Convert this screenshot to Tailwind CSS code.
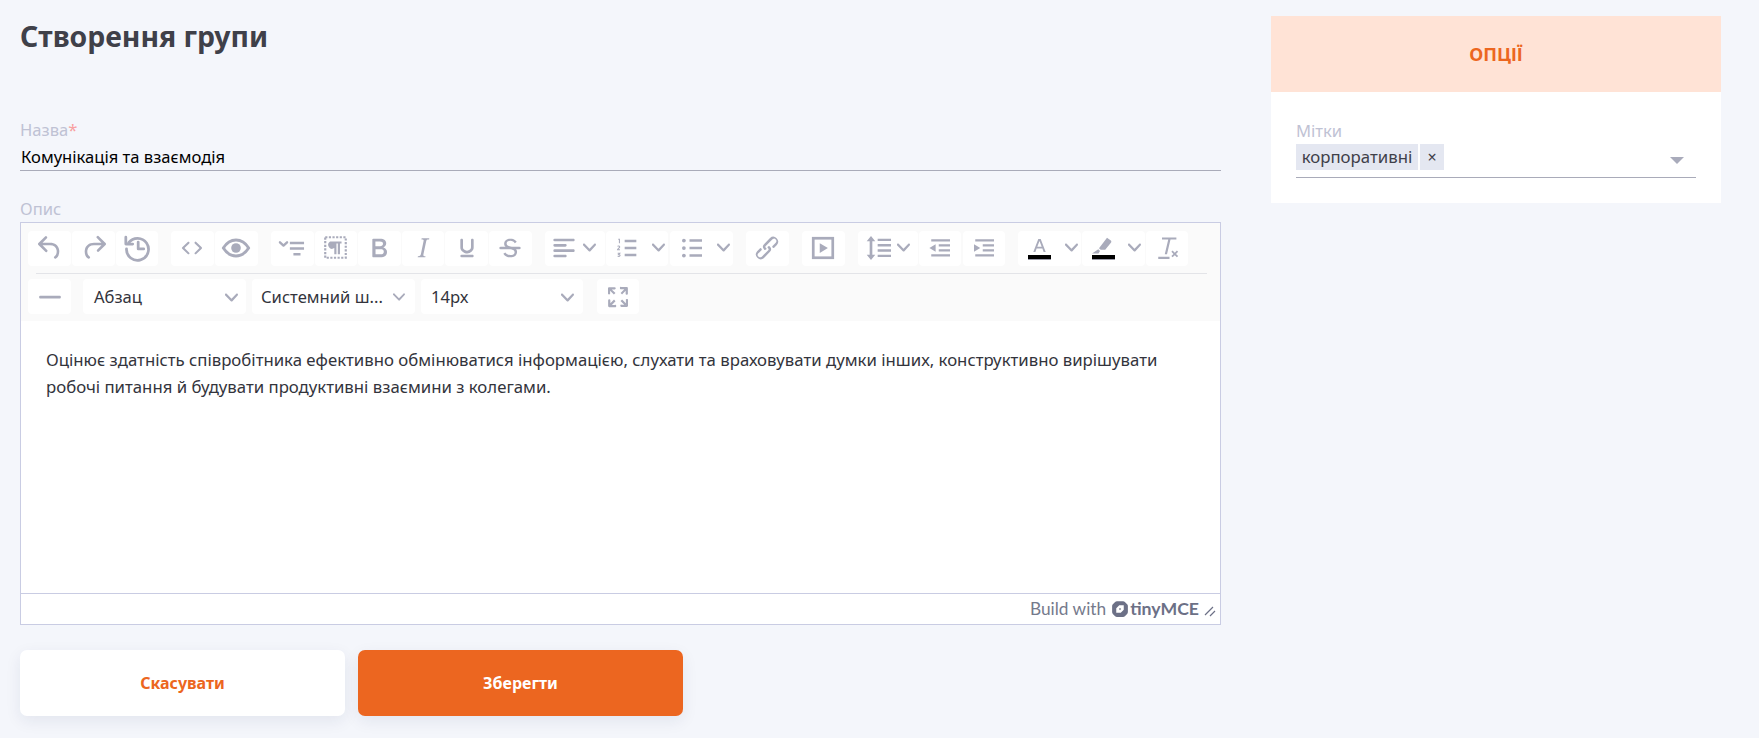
<!DOCTYPE html>
<html lang="uk">
  <head>
    <meta charset="UTF-8" />
    <title>Створення групи</title>
    <script src="https://cdn.jsdelivr.net/npm/@tailwindcss/browser@4"></script>
  </head>
  <body class="bg-[#f4f6fb] font-['Noto_Sans',sans-serif] overflow-hidden">
    <div class="h-[738px] flex items-start pl-[20px] pr-[38px]">
      <!-- Main form -->
      <div class="w-[1201px] mr-[50px] shrink-0">
        <h1 class="h-[72px] pt-[15px] text-[28.4px] leading-[42px] font-bold text-[#3f4049]">Створення групи</h1>
        <div class="mt-[46px] h-[26px] text-[16.6px] leading-[24px] text-[#bfc2d4]">Назва<span class="text-[#f8a0a0]">*</span></div>
        <div class="h-[27px] pl-[1px] border-b border-[#a9abb9] text-[16.6px] leading-[26px] text-black">Комунікація та взаємодія</div>
        <div class="mt-[26px] h-[25px] text-[16.6px] leading-[24px] text-[#bfc2d4]">Опис</div>

        <!-- Editor -->
        <div class="h-[403px] border border-[#c9cce3] flex flex-col bg-white">
          <div class="h-[98px] bg-[#fafafa] pt-[8px] pl-[7px] text-[#a9abbb]">
            <!-- Row 1 -->
            <div class="flex h-[35px] [&_svg]:-translate-y-px">
              <div class="flex gap-[1px]">
                <button class="w-[43px] h-[35px] bg-white rounded-[4px] flex items-center justify-center">
                  <svg class="w-[32px] h-[32px] shrink-0 fill-current" viewBox="0 0 24 24"><path d="M6.4 8H12c3.7 0 6.2 2 6.8 5.1.6 2.7-.4 5.6-2.3 6.8a1 1 0 0 1-1-1.8c1.1-.6 1.8-2.7 1.4-4.6-.5-2.1-2.1-3.5-4.9-3.5H6.4l3.3 3.3a1 1 0 1 1-1.4 1.4l-5-5a1 1 0 0 1 0-1.4l5-5a1 1 0 0 1 1.4 1.4L6.4 8Z"/></svg>
                </button>
                <button class="w-[43px] h-[35px] bg-white rounded-[4px] flex items-center justify-center">
                  <svg class="w-[32px] h-[32px] shrink-0 fill-current" viewBox="0 0 24 24"><path d="M17.6 10H12c-2.8 0-4.4 1.4-4.9 3.5-.4 2 .3 4 1.4 4.6a1 1 0 1 1-1 1.8c-2-1.2-2.9-4.1-2.3-6.8.6-3 3-5.1 6.8-5.1h5.6l-3.3-3.3a1 1 0 1 1 1.4-1.4l5 5a1 1 0 0 1 0 1.4l-5 5a1 1 0 0 1-1.4-1.4l3.3-3.3Z"/></svg>
                </button>
                <button class="w-[42px] h-[35px] bg-white rounded-[4px] flex items-center justify-center">
                  <svg class="w-[33px] h-[33px] shrink-0 fill-none stroke-current stroke-2" viewBox="0 0 24 24"><path d="M5.6 8.500A8 8 0 1 1 4 13" stroke-linecap="round"/><path d="M3.500 4.500v5h5" stroke-linecap="round" stroke-linejoin="round"/><path d="M12.500 8v5h4" stroke-linecap="round" stroke-linejoin="round"/></svg>
                </button>
              </div>
              <div class="flex gap-[1px] ml-[13px]">
                <button class="w-[43px] h-[35px] bg-white rounded-[4px] flex items-center justify-center pr-[2px]">
                  <svg class="w-[30px] h-[30px] shrink-0 fill-current" viewBox="0 0 24 24"><path d="M9.800 15.700c.3.300.3.800 0 1-.3.400-.9.400-1.200 0l-4.400-4.100a.8.800 0 0 1 0-1.200l4.400-4.200c.3-.3.900-.3 1.200 0 .3.300.3.800 0 1.100L6 12l3.800 3.700ZM14.200 15.700c-.3.300-.3.800 0 1 .4.400.9.400 1.200 0l4.400-4.100c.3-.3.300-.9 0-1.200l-4.400-4.200a.8.800 0 0 0-1.200 0c-.3.300-.3.800 0 1.100L18 12l-3.800 3.700Z"/></svg>
                </button>
                <button class="w-[43px] h-[35px] bg-white rounded-[4px] flex items-center justify-center pr-[2px]">
                  <svg class="w-[32px] h-[32px] shrink-0" viewBox="0 0 24 24"><path class="fill-none stroke-current" stroke-width="2.200" d="M2.500 12C5 8 8.200 6 12 6s7 2 9.500 6c-2.500 4-5.700 6-9.500 6s-7-2-9.500-6Z" stroke-linejoin="round"/><circle class="fill-current" cx="12" cy="12" r="3.600"/></svg>
                </button>
              </div>
              <div class="flex gap-[1px] ml-[13px]">
                <button class="w-[42.6px] h-[35px] bg-white rounded-[4px] flex items-center justify-center">
                  <svg class="w-[34px] h-[34px] shrink-0" viewBox="0 0 24 24"><path class="fill-none stroke-current" stroke-width="1.700" d="M3.500 8 6 10.300 8.500 8" stroke-linecap="round" stroke-linejoin="round"/><path class="fill-current" d="M10.500 7.500h10v1.800h-10zM10.500 11.500h10v1.800h-10zM13 15.500h5v1.800h-5z"/></svg>
                </button>
                <button class="w-[42.6px] h-[35px] bg-white rounded-[4px] flex items-center justify-center">
                  <svg class="w-[29px] h-[29px] shrink-0" viewBox="0 0 24 24"><rect class="fill-none stroke-current" stroke-width="1.800" stroke-dasharray="1.800 1.200" x="3.500" y="3.500" width="17" height="17"/><path class="fill-current" d="M7.500 7h9.500v1.700h-1.300V17.500h-1.800V8.700h-1.100V17.500h-1.800v-5A3 3 0 0 1 7.500 7Z"/></svg>
                </button>
                <button class="w-[42.6px] h-[35px] bg-white rounded-[4px] flex items-center justify-center">
                  <svg class="w-[32px] h-[32px] shrink-0 fill-current" viewBox="0 0 24 24"><path d="M7.800 19c-.3 0-.5 0-.6-.2l-.2-.5V5.700c0-.2 0-.4.2-.5l.6-.2h5c1.500 0 2.700.3 3.500 1 .7.600 1.100 1.400 1.100 2.500a3 3 0 0 1-.6 1.900c-.4.600-1 1-1.600 1.200.4.100.9.300 1.300.6s.8.700 1 1.200c.4.400.5 1 .5 1.600 0 1.300-.4 2.300-1.300 3-.8.700-2.100 1-3.800 1H7.800Zm5-8.300c.6 0 1.200-.1 1.600-.5.400-.3.600-.7.600-1.300 0-1.100-.8-1.700-2.300-1.700H9.300v3.500h3.500Zm.5 6c.7 0 1.300-.1 1.700-.4.400-.4.600-.9.600-1.500s-.2-1-.7-1.400c-.4-.3-1-.4-2-.4H9.400v3.700h3.900Z"/></svg>
                </button>
                <button class="w-[42.6px] h-[35px] bg-white rounded-[4px] flex items-center justify-center">
                  <svg class="w-[32px] h-[32px] shrink-0 fill-current" viewBox="0 0 24 24"><path d="m16.700 4.700-.1.900h-.3c-.6 0-1 0-1.400.3-.3.3-.4.600-.5 1.100l-2.100 9.800v.6c0 .5.400.8 1.400.8h.2l-.2.800H8l.2-.8h.2c1.100 0 1.800-.5 2-1.500l2-9.800.1-.5c0-.6-.4-.8-1.400-.8h-.3l.2-.9h5.800Z"/></svg>
                </button>
                <button class="w-[42.6px] h-[35px] bg-white rounded-[4px] flex items-center justify-center">
                  <svg class="w-[32px] h-[32px] shrink-0 fill-current" viewBox="0 0 24 24"><path d="M16 5c.6 0 1 .4 1 1v5.500a4 4 0 0 1-.4 1.800l-1 1.400a5.300 5.300 0 0 1-5.500 1 5 5 0 0 1-1.600-1c-.5-.4-.8-.9-1.100-1.400a4 4 0 0 1-.4-1.800V6c0-.6.400-1 1-1s1 .4 1 1v5.500c0 .3 0 .6.200 1l.6.700a3.300 3.300 0 0 0 2.200.8 3.400 3.400 0 0 0 2.200-.8c.3-.2.400-.5.600-.8l.2-.9V6c0-.6.400-1 1-1ZM8 17h8c.6 0 1 .4 1 1s-.4 1-1 1H8a1 1 0 0 1 0-2Z"/></svg>
                </button>
                <button class="w-[42.6px] h-[35px] bg-white rounded-[4px] flex items-center justify-center">
                  <svg class="w-[32px] h-[32px] shrink-0 fill-current" viewBox="0 0 24 24"><path d="M15.600 8.500c-.5-.7-1-1.100-1.300-1.300-.6-.4-1.300-.6-2-.6-2.700 0-2.800 1.700-2.800 2.100 0 1.600 1.800 2 3.200 2.300 4.400.9 4.600 2.800 4.600 3.900 0 1.400-.7 4.100-5 4.100A6.200 6.200 0 0 1 7 16.400l1.500-1.100c.4.600 1.600 2 3.700 2 1.600 0 2.500-.4 3-1.200.4-.8.3-2-.8-2.600-.7-.4-1.600-.7-2.900-1-1-.2-3.900-.8-3.900-3.600C7.600 6 10.300 5 12.400 5c2.900 0 4.200 1.600 4.700 2.400l-1.500 1.100Z"/><path d="M5 11h14a1 1 0 0 1 0 2H5a1 1 0 0 1 0-2Z"/></svg>
                </button>
              </div>
              <div class="flex gap-[1.500px] ml-[13px]">
                <button class="w-[60px] h-[35px] bg-white rounded-[4px] flex items-center pl-[3px] gap-[3px]">
                  <svg class="w-[32px] h-[32px] shrink-0 fill-current" viewBox="0 0 24 24"><path d="M5 5h14c.6 0 1 .4 1 1s-.4 1-1 1H5a1 1 0 1 1 0-2Zm0 4h8c.6 0 1 .4 1 1s-.4 1-1 1H5a1 1 0 1 1 0-2Zm0 8h8c.6 0 1 .4 1 1s-.4 1-1 1H5a1 1 0 0 1 0-2Zm0-4h14c.6 0 1 .4 1 1s-.4 1-1 1H5a1 1 0 0 1 0-2Z"/></svg>
                  <svg class="w-[13px] h-[13px] shrink-0 fill-current" viewBox="0 0 10 10"><path d="M8.700 2.200c.3-.3.800-.3 1 0 .4.400.4.900 0 1.200L5.700 7.800c-.3.300-.9.300-1.200 0L.2 3.400a.8.800 0 0 1 0-1.200c.3-.3.800-.3 1.100 0L5 6l3.700-3.800Z"/></svg>
                </button>
                <button class="w-[62px] h-[35px] bg-white rounded-[4px] flex items-center pl-[7px] gap-[11px]">
                  <svg class="w-[28px] h-[28px] shrink-0" viewBox="0 0 24 24"><path class="fill-current" d="M10 5h10v2H10zM10 11h10v2H10zM10 17h10v2H10z"/><path class="fill-none stroke-current" stroke-width=".900" d="M4.500 4.500h1v3.500M3.900 10.600c.5-.6 2-.4 1.800.6-.1.700-1.500 1.200-1.800 2.300h2.100M4 16.500h1.800l-1 1.100c1 0 1.400.4 1.200 1-.2.700-1.400.7-2 .3"/></svg>
                  <svg class="w-[13px] h-[13px] shrink-0 fill-current" viewBox="0 0 10 10"><path d="M8.700 2.200c.3-.3.800-.3 1 0 .4.400.4.900 0 1.200L5.700 7.800c-.3.300-.9.300-1.200 0L.2 3.400a.8.800 0 0 1 0-1.200c.3-.3.800-.3 1.100 0L5 6l3.700-3.800Z"/></svg>
                </button>
                <button class="w-[63px] h-[35px] bg-white rounded-[4px] flex items-center pl-[7px] gap-[10px]">
                  <svg class="w-[30px] h-[30px] shrink-0 fill-current" viewBox="0 0 24 24"><circle cx="5.500" cy="6" r="1.500"/><circle cx="5.500" cy="12" r="1.500"/><circle cx="5.500" cy="18" r="1.500"/><path d="M10 5h10v2H10zM10 11h10v2H10zM10 17h10v2H10z"/></svg>
                  <svg class="w-[13px] h-[13px] shrink-0 fill-current" viewBox="0 0 10 10"><path d="M8.700 2.200c.3-.3.800-.3 1 0 .4.400.4.900 0 1.200L5.700 7.800c-.3.300-.9.300-1.200 0L.2 3.400a.8.800 0 0 1 0-1.200c.3-.3.800-.3 1.100 0L5 6l3.700-3.800Z"/></svg>
                </button>
              </div>
              <button class="ml-[13px] w-[43px] h-[35px] bg-white rounded-[4px] flex items-center justify-center">
                <svg class="w-[30px] h-[30px] shrink-0 fill-current" viewBox="0 0 24 24"><path d="M6.200 12.300a1 1 0 0 1 1.400 1.400l-2 2a2 2 0 1 0 2.600 2.800l4.800-4.800a1 1 0 0 0 0-1.400 1 1 0 1 1 1.400-1.300 2.900 2.900 0 0 1 0 4L9.600 20a3.900 3.900 0 0 1-5.500-5.500l2-2Zm11.600-.6a1 1 0 0 1-1.400-1.400l2-2a2 2 0 1 0-2.600-2.800L11 10.300a1 1 0 0 0 0 1.400A1 1 0 1 1 9.600 13a2.900 2.900 0 0 1 0-4L14.400 4a3.900 3.900 0 0 1 5.500 5.500l-2 2Z"/></svg>
              </button>
              <button class="ml-[13px] w-[43px] h-[35px] bg-white rounded-[4px] flex items-center justify-center">
                <svg class="w-[26px] h-[26px] shrink-0" viewBox="0 0 24 24"><rect class="fill-none stroke-current" stroke-width="2.500" x="3" y="3" width="18" height="18"/><path class="fill-current" d="M9 7.500v9l7.500-4.500Z"/></svg>
              </button>
              <div class="flex gap-[1.500px] ml-[13px]">
                <button class="w-[60px] h-[35px] bg-white rounded-[4px] flex items-center pl-[5px] gap-[2px]">
                  <svg class="w-[32px] h-[32px] shrink-0 fill-current" viewBox="0 0 24 24"><path d="M11 5h10v1.800H11zM11 9h10v1.800H11zM11 13h10v1.800H11zM11 17h10v1.800H11z"/><path d="M6 3 2.800 7h2.200v10H2.800L6 21l3.200-4H7V7h2.200Z"/></svg>
                  <svg class="w-[13px] h-[13px] shrink-0 fill-current" viewBox="0 0 10 10"><path d="M8.700 2.200c.3-.3.800-.3 1 0 .4.400.4.900 0 1.200L5.700 7.800c-.3.300-.9.300-1.200 0L.2 3.400a.8.800 0 0 1 0-1.200c.3-.3.800-.3 1.100 0L5 6l3.700-3.800Z"/></svg>
                </button>
                <button class="w-[42px] h-[35px] bg-white rounded-[4px] flex items-center justify-center">
                  <svg class="w-[30px] h-[30px] shrink-0 fill-current" viewBox="0 0 24 24"><path d="M5 5h15v1.800H5zM11 9h9v1.800h-9zM11 13h9v1.800h-9zM5 17h15v1.800H5z"/><path d="M8.500 9v6L3.500 12Z"/></svg>
                </button>
                <button class="w-[42.500px] h-[35px] bg-white rounded-[4px] flex items-center justify-center">
                  <svg class="w-[30px] h-[30px] shrink-0 fill-current" viewBox="0 0 24 24"><path d="M5 5h15v1.800H5zM11 9h9v1.800h-9zM11 13h9v1.800h-9zM5 17h15v1.800H5z"/><path d="M4 9v6l5-3Z"/></svg>
                </button>
              </div>
              <div class="flex gap-[1px] ml-[13px]">
                <button class="w-[63px] h-[35px] bg-white rounded-[4px] flex items-center pl-[10px] gap-[14px]">
                  <span class="w-[23px] h-[22px] flex flex-col items-center justify-end">
                    <svg class="w-[23px] h-[15px] shrink-0 fill-current" viewBox="0 0 23 15"><path d="M10.300 1h2.400l5 13h-2.100l-1.200-3.500H8.600L7.400 14H5.300L10.300 1Zm3.400 7.800-2.200-5.900-2.200 5.900h4.400Z"/></svg>
                    <span class="block w-[23px] h-[5px] mt-[1px] bg-black border-b border-[#9a9aa8]"></span>
                  </span>
                  <svg class="w-[13px] h-[13px] shrink-0 fill-current" viewBox="0 0 10 10"><path d="M8.700 2.200c.3-.3.800-.3 1 0 .4.400.4.900 0 1.200L5.700 7.800c-.3.300-.9.300-1.200 0L.2 3.400a.8.800 0 0 1 0-1.200c.3-.3.800-.3 1.100 0L5 6l3.700-3.800Z"/></svg>
                </button>
                <button class="w-[63px] h-[35px] bg-white rounded-[4px] flex items-center pl-[10px] gap-[13px]">
                  <span class="w-[23px] h-[22px] flex flex-col items-center justify-end">
                    <svg class="w-[23px] h-[17px] shrink-0 fill-current" viewBox="0 0 23 17"><path d="M15 .8 18.500 3.300c1 .8 1.100 1.700.4 2.500l-5.700 7h-4.500L7 11.300Z"/><path d="M6.300 12.300 8 14 6.500 16.500H0Z"/></svg>
                    <span class="block w-[23px] h-[5px] bg-black border-b border-[#9a9aa8]"></span>
                  </span>
                  <svg class="w-[13px] h-[13px] shrink-0 fill-current" viewBox="0 0 10 10"><path d="M8.700 2.200c.3-.3.800-.3 1 0 .4.400.4.900 0 1.200L5.700 7.800c-.3.300-.9.300-1.200 0L.2 3.400a.8.800 0 0 1 0-1.200c.3-.3.800-.3 1.100 0L5 6l3.700-3.800Z"/></svg>
                </button>
                <button class="w-[42px] h-[35px] bg-white rounded-[4px] flex items-center justify-center">
                  <svg class="w-[30px] h-[30px] shrink-0 fill-current" viewBox="0 0 24 24"><path d="M8 3.500h11.500v1.700h-4.700L12 17h-1.800l2.800-11.800H8ZM5 19h9v1.800H5Z"/><path d="m15.500 15 1-1 1.700 1.700 1.700-1.700 1 1-1.700 1.700 1.700 1.700-1 1-1.700-1.700-1.700 1.700-1-1 1.700-1.700Z"/></svg>
                </button>
              </div>
            </div>
            <div class="h-px bg-[#e3e4e8] mt-[7px] ml-[8px] mr-[13px]"></div>
            <!-- Row 2 -->
            <div class="flex h-[35px] mt-[5px]">
              <button class="w-[43px] h-[35px] bg-white rounded-[4px] flex items-center justify-center">
                <svg class="w-[26px] h-[26px] shrink-0 fill-current" viewBox="0 0 24 24"><rect x="2" y="10.800" width="20" height="2.600" rx="1"/></svg>
              </button>
              <div class="flex gap-[6px] ml-[12px]">
                <button class="w-[163px] h-[35px] bg-white rounded-[4px] flex items-center justify-between pl-[11px] pr-[8px] pt-[1px] text-[16.6px] text-[#33343c]">
                  <span>Абзац</span>
                  <svg class="w-[13px] h-[13px] shrink-0 fill-[#a9abbb]" viewBox="0 0 10 10"><path d="M8.700 2.200c.3-.3.800-.3 1 0 .4.400.4.900 0 1.200L5.700 7.800c-.3.300-.9.300-1.200 0L.2 3.400a.8.800 0 0 1 0-1.200c.3-.3.800-.3 1.100 0L5 6l3.700-3.800Z"/></svg>
                </button>
                <button class="w-[163px] h-[35px] bg-white rounded-[4px] flex items-center justify-between pl-[9px] pr-[10px] pt-[1px] text-[16.6px] text-[#33343c]">
                  <span>Системний ш...</span>
                  <svg class="w-[12px] h-[12px] shrink-0 fill-[#a9abbb]" viewBox="0 0 10 10"><path d="M8.700 2.200c.3-.3.800-.3 1 0 .4.400.4.900 0 1.200L5.700 7.800c-.3.300-.9.300-1.200 0L.2 3.400a.8.800 0 0 1 0-1.200c.3-.3.800-.3 1.100 0L5 6l3.700-3.800Z"/></svg>
                </button>
                <button class="w-[162px] h-[35px] bg-white rounded-[4px] flex items-center justify-between pl-[10px] pr-[9px] pt-[1px] text-[16.6px] text-[#33343c]">
                  <span>14px</span>
                  <svg class="w-[13px] h-[13px] shrink-0 fill-[#a9abbb]" viewBox="0 0 10 10"><path d="M8.700 2.200c.3-.3.800-.3 1 0 .4.400.4.900 0 1.200L5.700 7.800c-.3.300-.9.300-1.200 0L.2 3.400a.8.800 0 0 1 0-1.200c.3-.3.800-.3 1.100 0L5 6l3.700-3.800Z"/></svg>
                </button>
              </div>
              <button class="ml-[14px] w-[42px] h-[35px] bg-white rounded-[4px] flex items-center justify-center">
                <svg class="w-[30px] h-[30px] shrink-0 fill-current" viewBox="0 0 24 24"><path d="m15.300 10-1.200-1.300 2.900-3h-2.300a.9.900 0 1 1 0-1.700H19c.5 0 .9.400.9.900v4.400a.9.900 0 1 1-1.800 0V7l-2.900 3Zm0 4 3 3v-2.300a.9.900 0 1 1 1.700 0V19c0 .5-.4.900-.9.900h-4.400a.9.900 0 1 1 0-1.800H17l-3-2.900 1.300-1.200ZM10 15.400l-2.900 3h2.300a.9.900 0 1 1 0 1.700H5a.9.900 0 0 1-.9-.9v-4.400a.9.900 0 1 1 1.800 0V17l2.900-3 1.200 1.300ZM8.700 10 5.700 7v2.300a.9.900 0 0 1-1.700 0V5c0-.5.400-.9.900-.9h4.400a.9.900 0 0 1 0 1.800H7l3 2.900-1.300 1.200Z"/></svg>
              </button>
            </div>
          </div>
          <!-- Editor body -->
          <div class="flex-1 px-[25px] pt-[25px] text-[16.75px] leading-[27px] text-[#33343c]">
            Оцінює здатність співробітника ефективно обмінюватися інформацією, слухати та враховувати думки інших, конструктивно вирішувати<br />робочі питання й будувати продуктивні взаємини з колегами.
          </div>
          <!-- Status bar -->
          <div class="h-[31px] border-t border-[#c9cce3] flex items-center justify-end pr-[4px]">
            <span class="font-['Lato',sans-serif] text-[17.3px] text-[#757a8c]">Build with</span>
            <svg class="w-[18px] h-[18px] ml-[5px] text-[#6c7086] fill-current" viewBox="0 0 24 24"><path fill-rule="evenodd" d="M8 1.500h8c1 0 1.800.3 2.500 1l3 3c.7.700 1 1.500 1 2.500v8c0 1-.3 1.800-1 2.500l-3 3c-.7.700-1.500 1-2.500 1H8c-1 0-1.800-.3-2.500-1l-3-3c-.7-.7-1-1.500-1-2.500V8c0-1 .3-1.800 1-2.500l3-3c.7-.7 1.500-1 2.500-1ZM11 7 7 11v6h6l4-4V7Zm0 4h2v2h-2Z"/></svg>
            <span class="font-['Lato',sans-serif] font-bold text-[17.7px] ml-[1px] text-[#6c7086]">tinyMCE</span>
            <svg class="w-[12px] h-[12px] ml-[5px] mt-[6px] stroke-[#6c7086] fill-none" viewBox="0 0 12 12"><path d="M1 9 9 1M6 10l5-5" stroke-width="1.200"/></svg>
          </div>
        </div>

        <!-- Actions -->
        <div class="flex gap-[13px] mt-[25px]">
          <button class="w-[325px] h-[66px] bg-white rounded-[7px] shadow-[0_5px_16px_rgba(30,40,90,0.08)] text-[16px] font-bold text-[#ec6620]">Скасувати</button>
          <button class="w-[325px] h-[66px] bg-[#ec6620] rounded-[7px] shadow-[0_5px_16px_rgba(30,40,90,0.08)] text-[16px] font-bold text-white">Зберегти</button>
        </div>
      </div>

      <!-- Options panel -->
      <div class="w-[450px] mt-[16px] shrink-0 bg-white">
        <div class="h-[76px] bg-[#ffe3d6] flex items-center justify-center text-[18px] font-bold text-[#ec6620]">ОПЦІЇ</div>
        <div class="h-[111px] px-[25px] pt-[26px]">
          <div class="h-[26px] text-[16.6px] leading-[26px] text-[#bfc2d4]">Мітки</div>
          <div class="h-[34px] border-b border-[#a9abb9] flex items-start justify-between">
            <div class="flex gap-[2px]">
              <span class="h-[26px] w-[122px] bg-[#e4e7f1] text-[16.8px] leading-[26px] text-center text-[#3f4049]">корпоративні</span>
              <span class="h-[26px] w-[24px] bg-[#e4e7f1] text-[16px] leading-[26px] text-center text-[#3f4049]">×</span>
            </div>
            <span class="w-0 h-0 mt-[13px] mr-[12px] border-x-[7px] border-x-transparent border-t-[7px] border-t-[#a9abbb]"></span>
          </div>
        </div>
      </div>
    </div>
  </body>
</html>
